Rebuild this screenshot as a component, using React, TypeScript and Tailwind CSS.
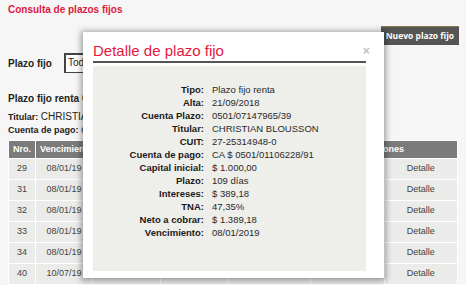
import React from "react";

type Row = { nro: string; venc: string; disabled?: boolean };

const rows: Row[] = [
  { nro: "29", venc: "08/01/19" },
  { nro: "31", venc: "08/01/19" },
  { nro: "32", venc: "08/01/19" },
  { nro: "33", venc: "08/01/19" },
  { nro: "34", venc: "08/01/19" },
  { nro: "40", venc: "10/07/19", disabled: true },
];

const detalle: Array<[string, string]> = [
  ["Tipo", "Plazo fijo renta"],
  ["Alta", "21/09/2018"],
  ["Cuenta Plazo", "0501/07147965/39"],
  ["Titular", "CHRISTIAN BLOUSSON"],
  ["CUIT", "27-25314948-0"],
  ["Cuenta de pago", "CA $ 0501/01106228/91"],
  ["Capital inicial", "$ 1.000,00"],
  ["Plazo", "109 días"],
  ["Intereses", "$ 389,18"],
  ["TNA", "47,35%"],
  ["Neto a cobrar", "$ 1.389,18"],
  ["Vencimiento", "08/01/2019"],
];

function DetalleModal() {
  return (
    <div className="absolute left-[83px] top-[32px] w-[301px] h-[246px] bg-white shadow-[0_1px_6px_2px_rgba(0,0,0,0.35)] px-[10px] pt-[9px]">
      <div className="flex items-center justify-between">
        <h2 className="text-[15px] leading-[19px] text-[#e3173e]">Detalle de plazo fijo</h2>
        <span className="text-[13px] leading-none font-bold text-[#c4c4c4] mr-[4px]">×</span>
      </div>
      <div className="mt-[1px] h-[2px] mr-[8px] bg-[#555555]" />
      <div className="mt-[3px] mr-[8px] h-[205px] bg-[#eeeeea] pt-[17px]">
        {detalle.map(([label, value]) => (
          <div key={label} className="flex text-[9.5px] leading-[13px]">
            <span className="w-[111px] text-right font-bold text-[#1a1a1a]">{label}:</span>
            <span className="ml-[8px] text-[#2a2a2a]">{value}</span>
          </div>
        ))}
      </div>
    </div>
  );
}

export default function App() {
  return (
    <div className="relative w-[466px] h-[285px] overflow-hidden bg-[#f6f6f6] font-['Liberation_Sans',Arial,sans-serif]">
      <h1 className="px-[8px] pt-[4px] text-[10px] leading-[12px] font-bold text-[#e3173e]">
        Consulta de plazos fijos
      </h1>

      <div className="flex justify-end pr-[7px] mt-[10px]">
        <button className="h-[19px] px-[5px] bg-[#555555] border-t border-[#8a7a50] text-white text-[8.5px] font-bold font-['Open_Sans',sans-serif]">
          Nuevo plazo fijo
        </button>
      </div>

      <div className="flex items-center px-[8px] mt-[8px]">
        <span className="w-[56px] text-[10px] font-bold text-[#222]">Plazo fijo</span>
        <div className="w-[150px] h-[20px] bg-white border border-[#444] border-l-2 border-t-2 pl-[2px] text-[10px] leading-[16px] text-[#222]">
          Todos
        </div>
      </div>

      <div className="px-[8px] mt-[19px] text-[10px] leading-[13px] font-bold text-[#222]">
        Plazo fijo renta 0501/07147965/39
      </div>
      <div className="px-[8px] mt-[5px] text-[9px] leading-[13px] text-[#222]">
        <span className="font-bold">Titular:</span> <span className="text-[10px]">CHRISTIAN BLOUSSON</span>
      </div>
      <div className="px-[8px] text-[9px] leading-[13px] text-[#222]">
        <span className="font-bold">Cuenta de pago:</span> CA $ 0501/01106228/91
      </div>

      <table className="ml-[8px] mt-[3px] w-[450px] table-fixed border-collapse text-[9px]">
        <thead>
          <tr className="h-[18px] bg-[#7b7b7b] text-white font-bold">
            <th className="w-[27px] border border-white font-bold">Nro.</th>
            <th className="w-[57px] border border-white font-bold text-left pl-[4px]">Vencimiento</th>
            <th className="w-[68px] border border-white" />
            <th className="w-[68px] border border-white" />
            <th className="w-[82px] border border-white" />
            <th colSpan={2} className="border border-white font-bold">Acciones</th>
          </tr>
        </thead>
        <tbody>
          {rows.map((r) => (
            <tr key={r.nro} className="h-[21px] bg-[#ebebe9] text-[#444]">
              <td className="border border-white text-center">{r.nro}</td>
              <td className="border border-white text-center">{r.venc}</td>
              <td className="border border-white" />
              <td className="border border-white" />
              <td className="border border-white" />
              <td className={`w-[49px] border border-white text-center ${r.disabled ? "text-[#aaa]" : ""}`}>
                Renovar
              </td>
              <td className="w-[49px] border border-white text-center">Detalle</td>
            </tr>
          ))}
        </tbody>
      </table>

      <DetalleModal />
    </div>
  );
}
